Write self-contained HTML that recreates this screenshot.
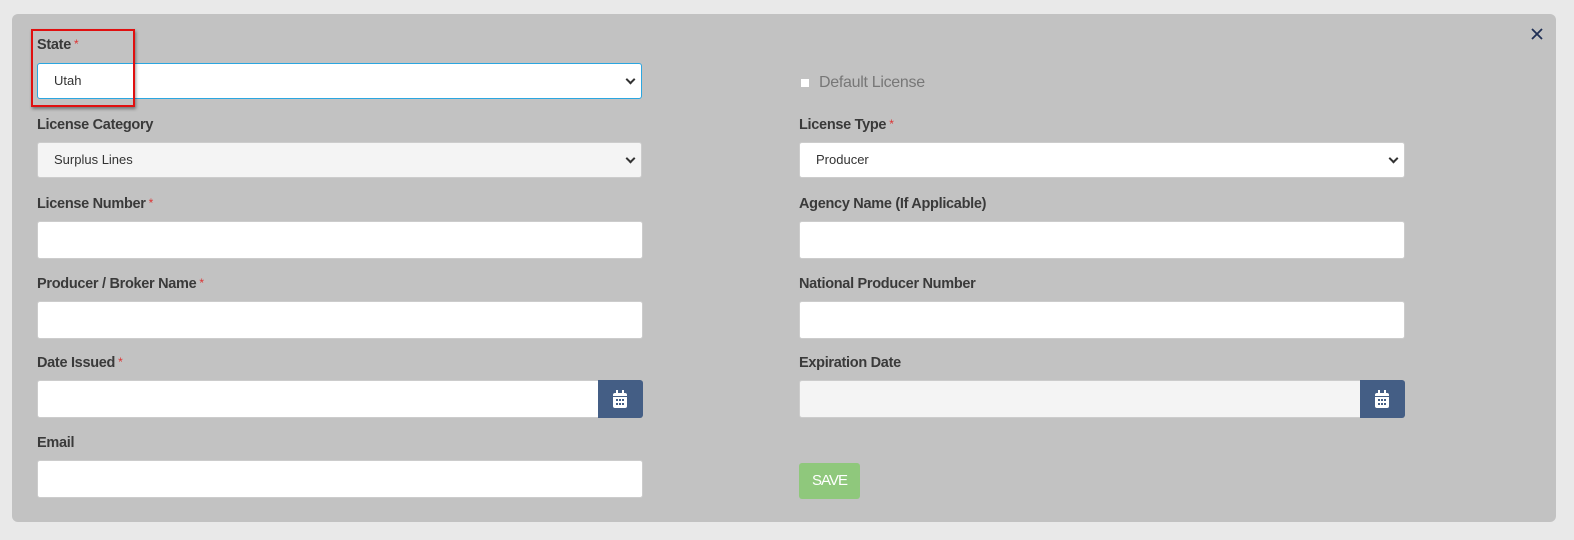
<!DOCTYPE html>
<html><head><style>
body{margin:0;width:1574px;height:540px;background:#e9e9e9;font-family:"Liberation Sans",sans-serif;position:relative;overflow:hidden}
.panel{position:absolute;left:12px;top:14px;width:1544px;height:508px;background:#c2c2c2;border-radius:6px}
.lbl{position:absolute;font-size:14.5px;color:#3a3a3a;font-weight:bold;letter-spacing:-0.3px}
.lbl i{color:#d33;font-style:normal;font-size:12px;vertical-align:top;margin-left:3px;font-weight:normal}
.inp{position:absolute;height:36px;background:#fff;border:1px solid #ccc;border-radius:3px;box-sizing:border-box;font-size:13px;color:#333;line-height:34px;padding-left:16px}
.sel:after{content:"";position:absolute;right:7px;top:12px;width:5px;height:5px;border-right:2px solid #333;border-bottom:2px solid #333;transform:rotate(45deg)}
.cal{position:absolute;width:45px;height:38px;background:#445e85;border-radius:0 3px 3px 0}
.cal svg{position:absolute;left:15px;top:10px}
</style></head><body>
<div class="panel"></div>
<svg style="position:absolute;left:1531px;top:28px" width="12" height="12" viewBox="0 0 12 12"><path d="M1 1L11 11M11 1L1 11" stroke="#1f2f55" stroke-width="1.8"/></svg>

<div class="lbl" style="left:37px;top:37px">State<i>*</i></div>
<div class="inp sel" style="left:37px;top:63px;width:605px;border-color:#2ba6e0">Utah</div>
<div style="position:absolute;left:31px;top:29px;width:100px;height:74px;border:2px solid #e01010;box-shadow:1px 2px 3px rgba(0,0,0,.4)"></div>

<div style="position:absolute;left:801px;top:79px;width:8px;height:8px;background:#fff"></div>
<div class="lbl" style="left:819px;top:74px;color:#777;font-size:16px;font-weight:normal">Default License</div>

<div class="lbl" style="left:37px;top:117px">License Category</div>
<div class="inp sel" style="left:37px;top:142px;width:605px;background:#f4f4f4">Surplus Lines</div>
<div class="lbl" style="left:799px;top:117px">License Type<i>*</i></div>
<div class="inp sel" style="left:799px;top:142px;width:606px">Producer</div>

<div class="lbl" style="left:37px;top:196px">License Number<i>*</i></div>
<div class="inp" style="left:37px;top:221px;width:606px;height:38px"></div>
<div class="lbl" style="left:799px;top:196px">Agency Name (If Applicable)</div>
<div class="inp" style="left:799px;top:221px;width:606px;height:38px"></div>

<div class="lbl" style="left:37px;top:276px">Producer / Broker Name<i>*</i></div>
<div class="inp" style="left:37px;top:301px;width:606px;height:38px"></div>
<div class="lbl" style="left:799px;top:276px">National Producer Number</div>
<div class="inp" style="left:799px;top:301px;width:606px;height:38px"></div>

<div class="lbl" style="left:37px;top:355px">Date Issued<i>*</i></div>
<div class="inp" style="left:37px;top:380px;width:562px;height:38px;border-radius:3px 0 0 3px"></div>
<div class="cal" style="left:598px;top:380px"><svg width="14" height="18" viewBox="0 0 14 18"><rect x="0" y="3" width="14" height="15" rx="2" fill="#fff"/><rect x="3" y="0" width="2" height="5" fill="#fff"/><rect x="9" y="0" width="2" height="5" fill="#fff"/><rect x="0" y="6" width="14" height="1" fill="#445e85"/><g fill="#445e85"><rect x="3" y="9" width="2" height="2"/><rect x="6" y="9" width="2" height="2"/><rect x="9" y="9" width="2" height="2"/><rect x="3" y="13" width="2" height="2"/><rect x="6" y="13" width="2" height="2"/><rect x="9" y="13" width="2" height="2"/></g></svg></div>
<div class="lbl" style="left:799px;top:355px">Expiration Date</div>
<div class="inp" style="left:799px;top:380px;width:562px;height:38px;background:#f4f4f4;border-radius:3px 0 0 3px"></div>
<div class="cal" style="left:1360px;top:380px"><svg width="14" height="18" viewBox="0 0 14 18"><rect x="0" y="3" width="14" height="15" rx="2" fill="#fff"/><rect x="3" y="0" width="2" height="5" fill="#fff"/><rect x="9" y="0" width="2" height="5" fill="#fff"/><rect x="0" y="6" width="14" height="1" fill="#445e85"/><g fill="#445e85"><rect x="3" y="9" width="2" height="2"/><rect x="6" y="9" width="2" height="2"/><rect x="9" y="9" width="2" height="2"/><rect x="3" y="13" width="2" height="2"/><rect x="6" y="13" width="2" height="2"/><rect x="9" y="13" width="2" height="2"/></g></svg></div>

<div class="lbl" style="left:37px;top:435px">Email</div>
<div class="inp" style="left:37px;top:460px;width:606px;height:38px"></div>

<div style="position:absolute;left:799px;top:463px;width:61px;height:36px;background:#8fc87c;border-radius:3px;color:#fff;font-size:15px;line-height:36px;text-align:center;letter-spacing:-1px">SAVE</div>
</body></html>
